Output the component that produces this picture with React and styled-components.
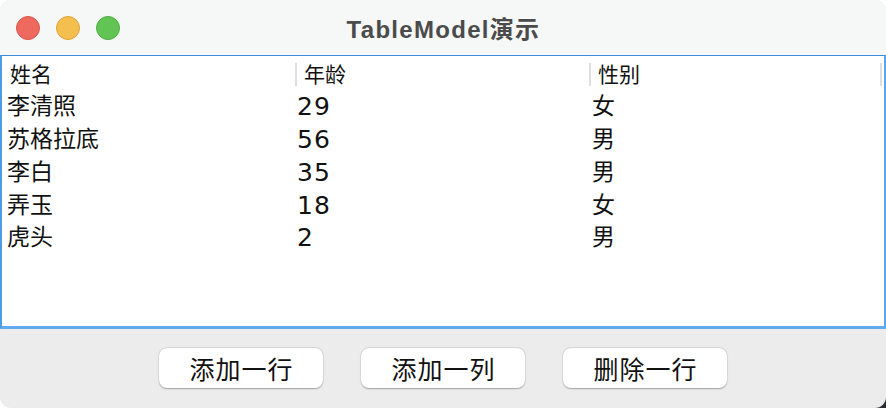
import React from "react";
import styled, { createGlobalStyle } from "styled-components";

const Global = createGlobalStyle`
  html, body { margin: 0; padding: 0; background: #ffffff; }
  body { width: 886px; height: 408px; overflow: hidden; }
`;

const CJK = `"DejaVu Sans", "Noto Sans CJK SC", sans-serif`;

const Page = styled.div`
  position: relative;
  z-index: 0;
  width: 886px;
  height: 408px;
`;

const Backdrop = styled.div`
  position: absolute;
  right: 0;
  bottom: 0;
  width: 14px;
  height: 14px;
  background: #2b2c30;
  z-index: -1;
`;

const Window = styled.div`
  position: relative;
  width: 886px;
  height: 408px;
  border-radius: 11px;
  overflow: hidden;
  display: flex;
  flex-direction: column;
  background: #ececec;
`;

const TitleBar = styled.div`
  height: 55px;
  flex: none;
  background: #f6f7f7;
  display: grid;
  grid-template-columns: 1fr auto 1fr;
  align-items: center;
`;

const Lights = styled.div`
  display: flex;
  gap: 16px;
  padding-left: 16px;
  align-items: center;
`;

const Light = styled.span`
  width: 24px;
  height: 24px;
  border-radius: 50%;
  box-sizing: border-box;
  background: ${(p) => p.$color};
  border: 1px solid ${(p) => p.$edge};
`;

const Title = styled.div`
  font-family: "Liberation Sans", "Noto Sans CJK SC", sans-serif;
  font-weight: bold;
  font-size: 24px;
  color: #4b4b4b;
  letter-spacing: 1.3px;
  padding-left: 1px;
`;

const TableFrame = styled.div`
  height: 274px;
  flex: none;
  box-sizing: border-box;
  background: #ffffff;
  border-top: 1px solid #3d8ad6;
  border-left: 2px solid #4f9be6;
  border-right: 2px solid #5aa5ee;
  border-bottom: 3px solid #62abf0;
  padding-top: 1px;
`;

const Row = styled.div`
  display: grid;
  grid-template-columns: 294px 294px 1fr;
  height: ${(p) => (p.$header ? "31px" : "32.75px")};
  align-items: center;
`;

const HeadCell = styled.div`
  height: 100%;
  display: flex;
  align-items: center;
  font-family: ${CJK};
  font-size: 21px;
  color: #111;
  padding-left: ${(p) => p.$pad}px;
  position: relative;
`;

const Sep = styled.span`
  position: absolute;
  top: 6px;
  width: 2px;
  height: 23px;
  background: #dedede;
  left: ${(p) => (p.$right ? "auto" : "-1px")};
  right: ${(p) => (p.$right ? "2px" : "auto")};
`;

const Cell = styled.div`
  font-family: ${CJK};
  font-size: ${(p) => (p.$num ? 25 : 23)}px;
  letter-spacing: ${(p) => (p.$num ? 1.2 : 0)}px;
  color: #111;
  padding-left: ${(p) => p.$pad}px;
  padding-top: 5px;
  white-space: nowrap;
  line-height: 1;
`;

const ButtonBar = styled.div`
  flex: 1;
  display: flex;
  justify-content: center;
  align-items: center;
  gap: 38px;
  padding-bottom: 1px;
`;

const Button = styled.button`
  width: 164px;
  height: 40px;
  border: none;
  border-radius: 8px;
  background: #ffffff;
  box-shadow: 0 0.5px 1.5px rgba(0,0,0,0.3), 0 0 0 0.5px rgba(0,0,0,0.06);
  font-family: ${CJK};
  font-size: 25px;
  color: #111;
  letter-spacing: 1px;
  padding: 0 0 0 1px;
  display: flex;
  align-items: center;
  justify-content: center;
`;

const data = [
  ["李清照", "29", "女"],
  ["苏格拉底", "56", "男"],
  ["李白", "35", "男"],
  ["弄玉", "18", "女"],
  ["虎头", "2", "男"],
];

export default function App() {
  return (
    <Page>
      <Global />
      <Backdrop />
      <Window>
        <TitleBar>
          <Lights>
            <Light $color="#ee6a5f" $edge="#d9574c" />
            <Light $color="#f5bf4f" $edge="#dca63a" />
            <Light $color="#61c454" $edge="#4fae42" />
          </Lights>
          <Title>TableModel演示</Title>
          <div />
        </TitleBar>
        <TableFrame>
          <Row $header>
            <HeadCell $pad={8}>姓名</HeadCell>
            <HeadCell $pad={8}>
              <Sep />
              年龄
            </HeadCell>
            <HeadCell $pad={8}>
              <Sep />
              性别
              <Sep $right />
            </HeadCell>
          </Row>
          {data.map((r) => (
            <Row key={r[0]}>
              <Cell $pad={5}>{r[0]}</Cell>
              <Cell $pad={1} $num>{r[1]}</Cell>
              <Cell $pad={2}>{r[2]}</Cell>
            </Row>
          ))}
        </TableFrame>
        <ButtonBar>
          <Button>添加一行</Button>
          <Button>添加一列</Button>
          <Button>删除一行</Button>
        </ButtonBar>
      </Window>
    </Page>
  );
}
